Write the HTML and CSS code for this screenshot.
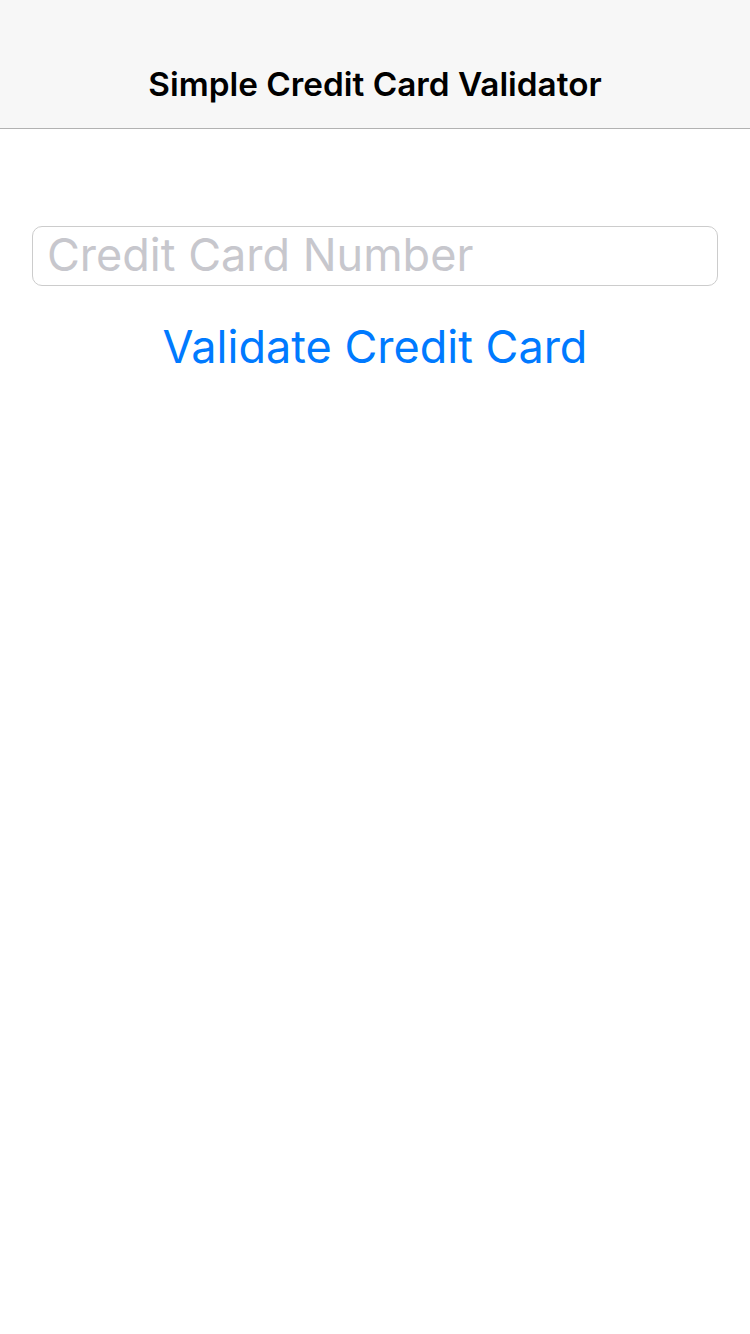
FILE: index.html
```html
<!DOCTYPE html>
<html>
<head>
<meta charset="utf-8">
<link rel="stylesheet" href="styles.css">
</head>
<body>
<header class="navbar">
  <h1 class="title">Simple Credit Card Validator</h1>
</header>
<main class="content">
  <div class="field">
    <input class="input" type="text" placeholder="Credit Card Number">
  </div>
  <button class="action">Validate Credit Card</button>
</main>
</body>
</html>
```
FILE: styles.css
```css
html, body {
  margin: 0;
  padding: 0;
  background: #ffffff;
  font-family: Inter, "Liberation Sans", sans-serif;
}
.navbar {
  height: 129px;
  box-sizing: border-box;
  background: #f7f7f7;
  border-bottom: 1px solid #b2b2b2;
  display: flex;
  align-items: flex-end;
  justify-content: center;
  padding-bottom: 24px;
}
.title {
  margin: 0;
  font-size: 33.3px;
  font-weight: 600;
  color: #000;
  line-height: 40px;
}
.content {
  display: flex;
  flex-direction: column;
  align-items: center;
  padding: 97px 32px 0;
}
.field {
  width: 100%;
}
.input {
  display: block;
  width: 100%;
  box-sizing: border-box;
  height: 60px;
  border: 1px solid #cccccc;
  border-radius: 10px;
  padding: 0 14px 3px;
  font-family: inherit;
  font-size: 45px;
  color: #000;
  outline: none;
  background: #fff;
}
.input::placeholder {
  color: #c7c7cd;
}
.action {
  margin-top: 33px;
  border: 0;
  background: none;
  padding: 0;
  font-family: inherit;
  font-size: 45px;
  line-height: 56px;
  color: #007aff;
  cursor: pointer;
}
```
